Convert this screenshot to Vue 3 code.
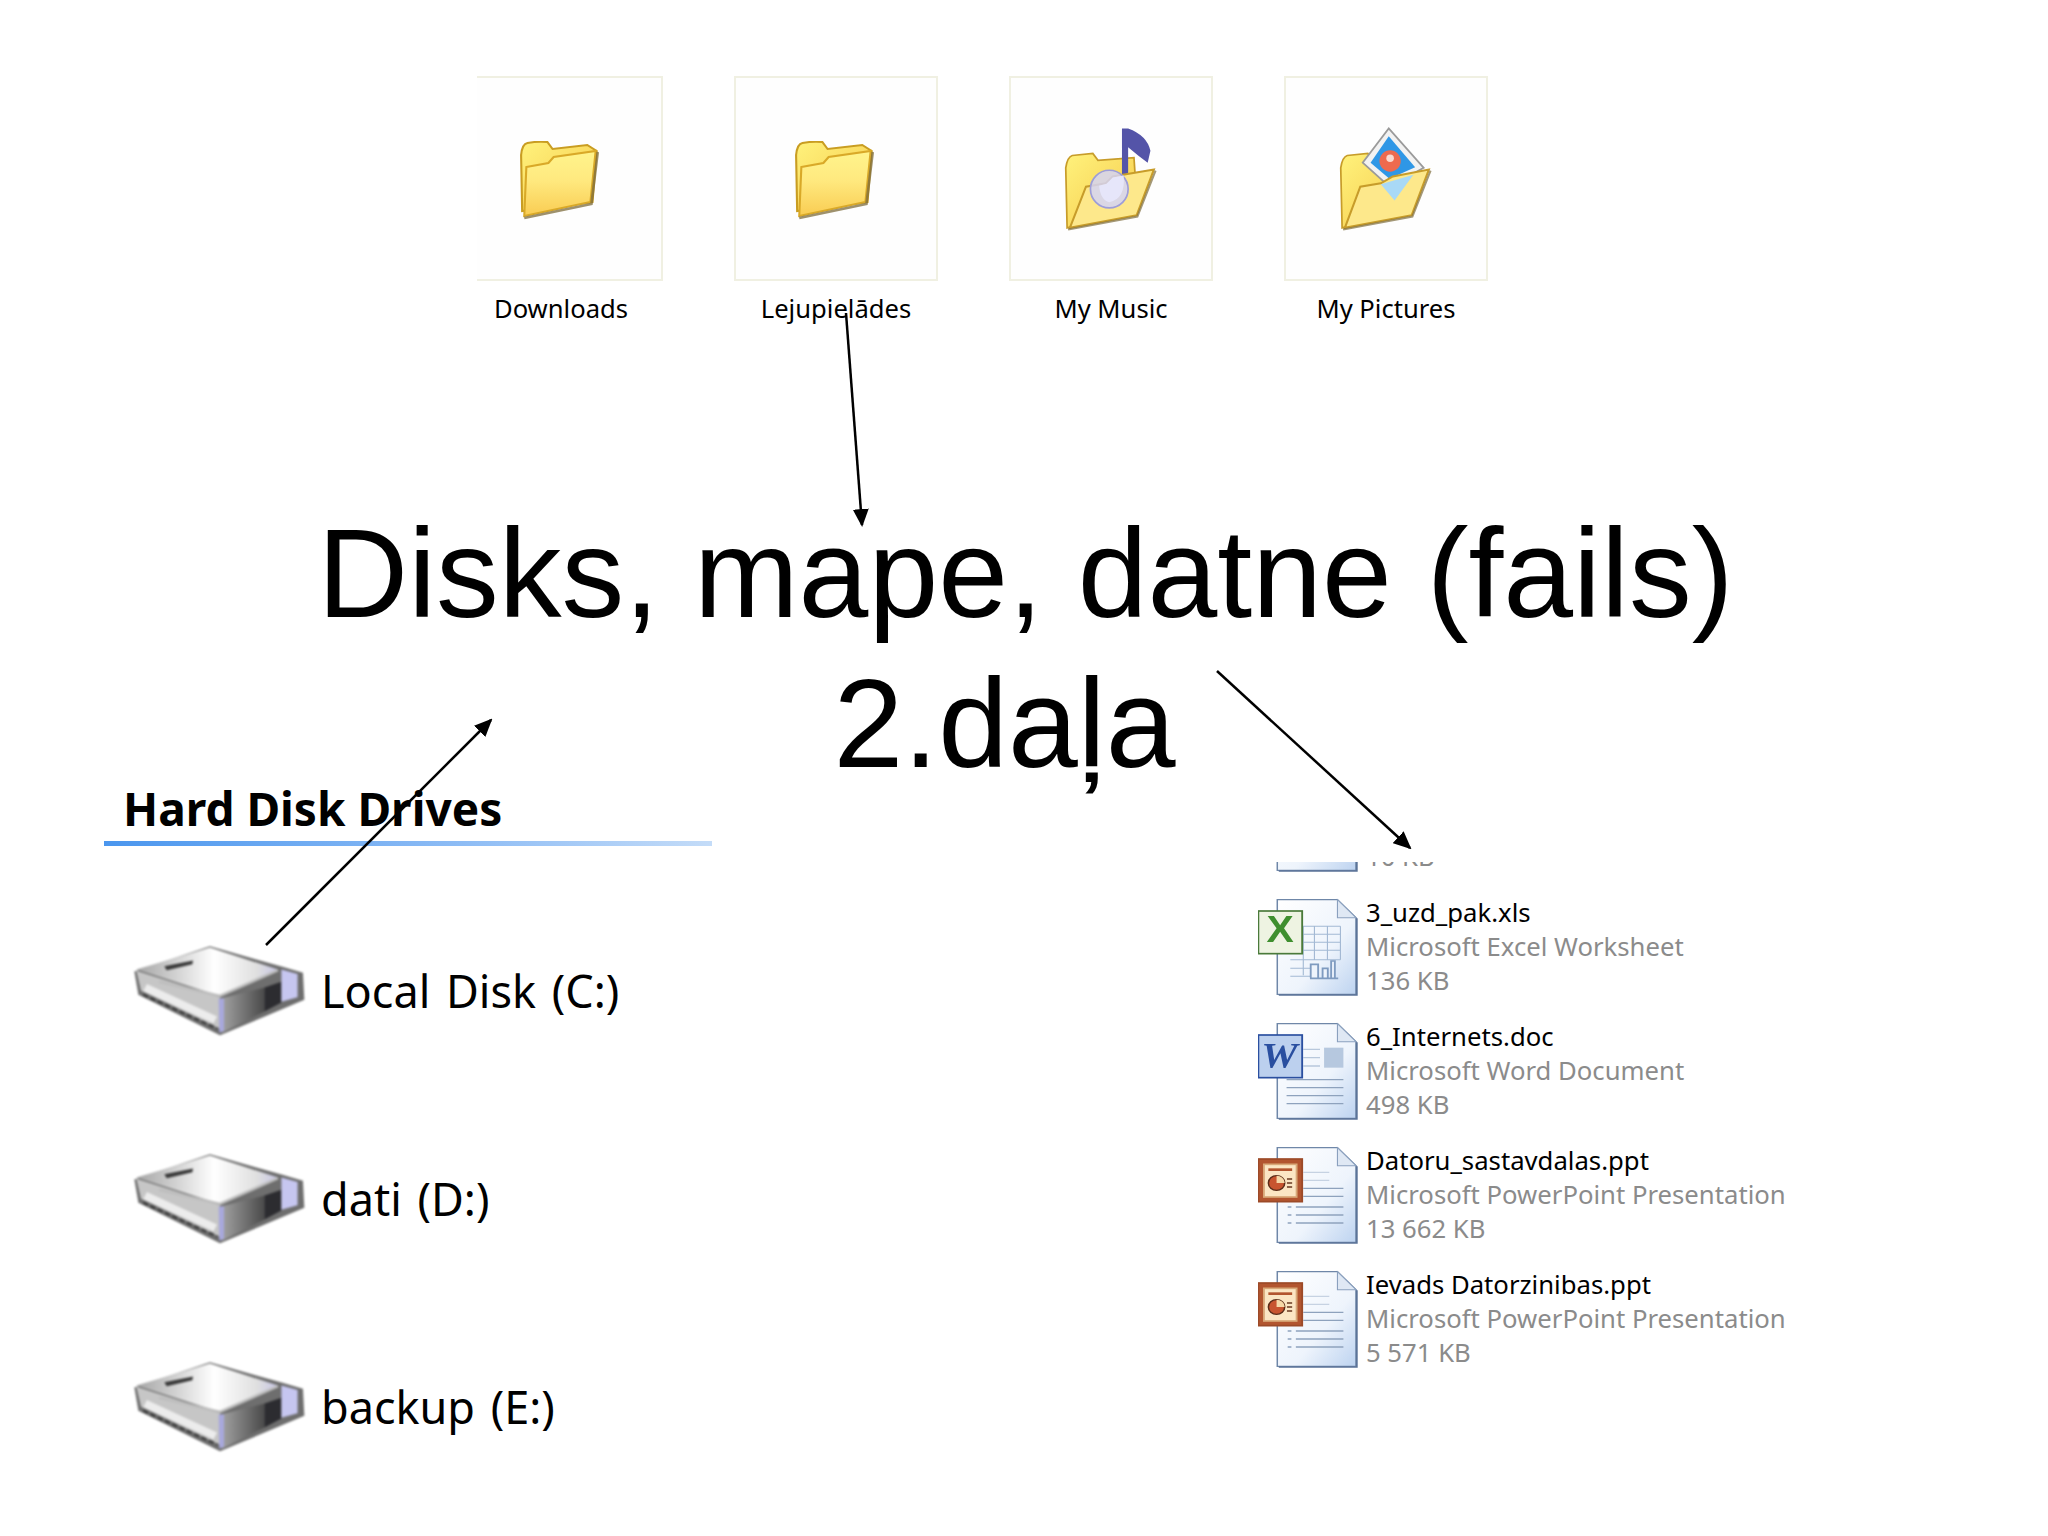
<template>
  <main class="slide">
    <svg class="sprite" aria-hidden="true">
      <defs>
        <linearGradient id="folderFront" x1="0" y1="0" x2="0" y2="1">
          <stop offset="0" stop-color="#fff48c" />
          <stop offset="0.45" stop-color="#ffe97f" />
          <stop offset="1" stop-color="#f9cc52" />
        </linearGradient>
        <linearGradient id="folderBack" x1="0" y1="0" x2="1" y2="1">
          <stop offset="0" stop-color="#fff27c" />
          <stop offset="1" stop-color="#f5c84a" />
        </linearGradient>
        <linearGradient id="diskTop" x1="0" y1="0" x2="1" y2="0">
          <stop offset="0" stop-color="#a5a5a5" />
          <stop offset="0.28" stop-color="#d2d2d2" />
          <stop offset="0.55" stop-color="#ffffff" />
          <stop offset="0.85" stop-color="#dfdfdf" />
          <stop offset="1" stop-color="#c6c5e4" />
        </linearGradient>
        <linearGradient id="diskSide" x1="0" y1="0" x2="1" y2="0">
          <stop offset="0" stop-color="#a4a4a4" />
          <stop offset="1" stop-color="#4a4a4a" />
        </linearGradient>
        <linearGradient id="docBody" x1="0" y1="0" x2="1" y2="1">
          <stop offset="0" stop-color="#ffffff" />
          <stop offset="0.6" stop-color="#eef4fc" />
          <stop offset="1" stop-color="#bdd3f0" />
        </linearGradient>
      </defs>

      <symbol id="icon-folder" viewBox="0 0 80 80" preserveAspectRatio="none">
        <path d="M3 70 L2 14 Q3 3 8 2 Q18 0 27 1 L32 8 L65 4 L74 10 L70 61 Z" fill="url(#folderBack)" stroke="#c99d22" stroke-width="2" />
        <path d="M7 26 L28 22 L33 16 L73 10 L68 61 L5 75 Z" fill="url(#folderFront)" stroke="#d9a928" stroke-width="2" />
        <path d="M5 77 L69 63 L75 11" fill="none" stroke="#7d6c3c" stroke-width="2.5" opacity="0.75" />
      </symbol>

      <symbol id="icon-music" viewBox="190 195 290 315">
        <path d="M207 495 L203 320 Q208 288 222 284 L282 278 L297 298 L402 290 L412 440 Z" fill="url(#folderBack)" stroke="#c79c2a" stroke-width="5" />
        <path d="M367 205 L385 205 Q440 225 450 270 L442 305 L415 285 L385 260 L385 340 L367 340 Z" fill="#5454a8" />
        <path d="M215 495 L262 375 L320 365 L340 345 L460 325 L410 458 Z" fill="#fde88b" stroke="#c79c2a" stroke-width="6" />
        <circle cx="330" cy="382" r="55" fill="#d4d4f4" fill-opacity="0.85" stroke="#9d9dd8" stroke-width="5" />
        <path d="M300 372 L322 366 L340 348 L372 342 Q378 410 330 420 Q305 415 300 372 Z" fill="#e6e6fa" />
        <path d="M210 500 L412 462 L465 328" fill="none" stroke="#7d6c3c" stroke-width="6" opacity="0.7" />
      </symbol>

      <symbol id="icon-pictures" viewBox="1015 195 290 315">
        <path d="M1032 495 L1028 320 Q1033 288 1047 284 L1107 278 L1122 298 L1227 290 L1237 440 Z" fill="url(#folderBack)" stroke="#c79c2a" stroke-width="5" />
        <path d="M1168 205 L1270 320 L1170 375 L1092 305 Z" fill="#f2f2f2" stroke="#9a9a9a" stroke-width="5" />
        <path d="M1168 228 L1245 318 L1170 352 L1115 305 Z" fill="#2f97e6" />
        <circle cx="1172" cy="300" r="31" fill="#ee6a4e" />
        <circle cx="1172" cy="292" r="11" fill="#fbd9cf" />
        <path d="M1040 495 L1085 375 L1145 365 L1180 345 L1285 325 L1235 458 Z" fill="#fde88b" stroke="#c79c2a" stroke-width="6" />
        <path d="M1145 368 L1240 340 L1185 415 Z" fill="#a9d9f6" />
        <path d="M1035 500 L1237 462 L1290 328" fill="none" stroke="#7d6c3c" stroke-width="6" opacity="0.7" />
      </symbol>

      <symbol id="icon-drive" viewBox="42 46 510 282" preserveAspectRatio="none">
        <path d="M46 128 L270 50 L480 112 L546 132 L550 216 L300 326 L58 200 Z" fill="#6e6e6e" />
        <path d="M52 126 L300 208 L300 306 L66 188 Z" fill="#c6c6c6" />
        <path d="M78 178 L286 278" stroke="#ececec" stroke-width="24" />
        <path d="M72 200 L292 305" stroke="#3e3e3e" stroke-width="8" stroke-dasharray="16 8" />
        <path d="M302 212 L432 178 L432 252 L306 318 Z" fill="url(#diskSide)" />
        <path d="M432 178 L482 160 L482 224 L432 252 Z" fill="#2c2c30" />
        <path d="M296 212 L312 212 L312 312 L298 318 Z" fill="#a8a8dc" />
        <path d="M482 122 L530 136 L530 208 L482 222 Z" fill="#c6c6f0" />
        <path d="M52 122 L270 54 L472 122 L300 204 Z" fill="url(#diskTop)" />
        <path d="M135 112 L220 94 L218 106 L142 124 Z" fill="#3a3a3a" />
        <path d="M120 160 L300 204 L472 124" fill="none" stroke="#bdbdbd" stroke-width="8" />
      </symbol>

      <symbol id="doc-sheet" viewBox="40 170 280 300" preserveAspectRatio="none">
        <path d="M100 178 L262 178 L312 232 L312 462 L100 462 Z" fill="url(#docBody)" stroke="#6f87a8" stroke-width="4" />
        <path d="M262 178 L262 232 L312 232 Z" fill="#dfe8f4" stroke="#8aa0be" stroke-width="3" />
        <path d="M104 464 L314 464 L314 234" fill="none" stroke="#5b7398" stroke-width="5" />
      </symbol>
    </svg>

    <section class="tiles">
      <figure v-for="tile in tiles" :key="tile.label" :class="['tile', { cut: tile.cut }]">
        <div class="tile-frame">
          <svg :class="['tile-icon', tile.icon]"><use :href="`#icon-${tile.icon}`" /></svg>
        </div>
        <figcaption>{{ tile.label }}</figcaption>
      </figure>
    </section>

    <h1 class="title">
      <span>Disks, mape, datne (fails)</span>
      <span class="second">2.daļa</span>
    </h1>

    <section class="lower">
      <div class="drives">
        <h2>Hard Disk Drives</h2>
        <ul>
          <li v-for="drive in drives" :key="drive">
            <svg class="drive-icon"><use href="#icon-drive" /></svg>
            <span>{{ drive }}</span>
          </li>
        </ul>
      </div>

      <div class="files">
        <ul>
          <li v-for="file in files" :key="file.name">
            <svg class="file-icon" viewBox="40 170 280 300" preserveAspectRatio="none">
              <use href="#doc-sheet" x="40" y="170" width="280" height="300" />
              <template v-if="file.kind === 'xls'">
                <path d="M135 258 H270 M135 282 H270 M135 306 H270 M135 330 H270 M135 358 H270 M135 384 H190 M135 408 H190 M170 258 V405 M200 258 V358 M235 258 V358 M270 258 V358" stroke="#a3b9d4" stroke-width="3" fill="none" />
                <path d="M190 412 V372 H210 V412 M222 412 V384 H236 V412 M245 412 V362 H255 V412 M188 414 H264" stroke="#7f9bc0" stroke-width="5" fill="#eef4fc" />
                <rect x="49" y="212" width="118" height="128" fill="#eef3e2" stroke="#4a7a3a" stroke-width="5" />
                <text x="108" y="306" class="badge-x">X</text>
              </template>
              <template v-else-if="file.kind === 'doc'">
                <path d="M170 255 H215 M170 280 H215 M170 305 H215" stroke="#b8c8dc" stroke-width="4" />
                <rect x="226" y="250" width="52" height="60" fill="#b6c8df" />
                <path d="M125 346 H278 M125 370 H278 M125 394 H278 M125 418 H278" stroke="#8ea2bd" stroke-width="4" />
                <rect x="49" y="212" width="118" height="128" fill="#bcd0ee" stroke="#2a4fa0" stroke-width="5" />
                <text x="106" y="312" class="badge-w">W</text>
              </template>
              <template v-else>
                <path d="M170 252 H240 M170 276 H240" stroke="#c6d2e2" stroke-width="4" />
                <path d="M170 300 H278 M170 324 H278 M150 356 H278 M150 380 H278 M150 404 H278" stroke="#8ea2bd" stroke-width="4" />
                <path d="M128 356 H138 M128 380 H138 M128 404 H138" stroke="#8ea2bd" stroke-width="4" />
                <rect x="49" y="212" width="118" height="128" fill="#b2552f" stroke="#9c4a28" stroke-width="5" />
                <rect x="64" y="228" width="88" height="98" fill="#fbe6c4" stroke="#d8a878" stroke-width="5" />
                <rect x="76" y="240" width="64" height="8" fill="#b2552f" />
                <circle cx="98" cy="284" r="22" fill="#c8552f" stroke="#5a2c18" stroke-width="4" />
                <path d="M98 284 V262 A22 22 0 0 1 120 284 Z" fill="#f6d9a8" />
                <path d="M126 272 H140 M126 284 H140 M126 296 H140" stroke="#6a3a20" stroke-width="4" />
              </template>
            </svg>
            <div class="file-text">
              <strong>{{ file.name }}</strong>
              <span>{{ file.type }}</span>
              <span>{{ file.size }}</span>
            </div>
          </li>
        </ul>
      </div>
    </section>

    <svg class="arrows" viewBox="0 0 2048 1536">
      <defs>
        <marker id="head" markerWidth="18" markerHeight="16" refX="16" refY="8" orient="auto" markerUnits="userSpaceOnUse">
          <path d="M0 0 L18 8 L0 16 Z" fill="#000" />
        </marker>
      </defs>
      <line x1="846" y1="313" x2="862" y2="525" />
      <line x1="266" y1="945" x2="491" y2="720" />
      <line x1="1217" y1="671" x2="1410" y2="848" />
    </svg>
  </main>
</template>

<script setup>
const tiles = [
  { label: 'Downloads', icon: 'folder', cut: true },
  { label: 'Lejupielādes', icon: 'folder' },
  { label: 'My Music', icon: 'music' },
  { label: 'My Pictures', icon: 'pictures' }
];

const drives = ['Local Disk (C:)', 'dati (D:)', 'backup (E:)'];

const files = [
  { name: '2_uzd.doc', type: 'Microsoft Word Document', size: '10 KB', kind: 'doc' },
  { name: '3_uzd_pak.xls', type: 'Microsoft Excel Worksheet', size: '136 KB', kind: 'xls' },
  { name: '6_Internets.doc', type: 'Microsoft Word Document', size: '498 KB', kind: 'doc' },
  { name: 'Datoru_sastavdalas.ppt', type: 'Microsoft PowerPoint Presentation', size: '13 662 KB', kind: 'ppt' },
  { name: 'Ievads Datorzinibas.ppt', type: 'Microsoft PowerPoint Presentation', size: '5 571 KB', kind: 'ppt' }
];
</script>

<style>
html,
body {
  margin: 0;
  background: #fff;
}
</style>

<style scoped>
.slide {
  position: relative;
  width: 2048px;
  height: 1536px;
  overflow: hidden;
  background: #fff;
  color: #000;
  font-family: "Liberation Sans", Arial, sans-serif;
}

.sprite {
  position: absolute;
  width: 0;
  height: 0;
}

.tiles {
  display: flex;
  gap: 71px;
  padding: 76px 0 0 459px;
  font-family: "Noto Sans", sans-serif;
}

.tile {
  margin: 0;
  width: 204px;
}

.tile-frame {
  position: relative;
  box-sizing: border-box;
  width: 204px;
  height: 205px;
  display: flex;
  align-items: center;
  justify-content: center;
  border: 2px solid #f0f0e2;
  background: #fefefe;
}

.tile.cut .tile-frame::before {
  content: "";
  position: absolute;
  left: -2px;
  top: -2px;
  bottom: -2px;
  width: 18px;
  background: #fff;
}

.tile-icon {
  width: 84px;
  height: 80px;
  margin-top: 5px;
  filter: blur(0.6px);
}

.tile-icon.music,
.tile-icon.pictures {
  width: 100px;
  height: 108px;
  margin-top: 0;
}

figcaption {
  margin-top: 8px;
  text-align: center;
  font-size: 25.6px;
  line-height: 40px;
  white-space: nowrap;
}

.title {
  display: flex;
  flex-direction: column;
  align-items: center;
  margin: 170px 0 0;
  padding-left: 3px;
  font-size: 125.5px;
  font-weight: 400;
  line-height: 150px;
}

.title .second {
  margin-right: 42px;
}

.lower {
  display: grid;
  grid-template-columns: 608px 1fr;
  gap: 546px;
  margin-top: -18px;
  padding-left: 104px;
  font-family: "Noto Sans", sans-serif;
}

.drives h2 {
  margin: 0;
  padding: 0 0 2px 19px;
  height: 58px;
  font-size: 46px;
  line-height: 54px;
  font-weight: 700;
  border-bottom: 5px solid;
  border-image: linear-gradient(90deg, #4a96ee, #8fbdf5 60%, #c4dcf8) 1;
}

ul {
  list-style: none;
  margin: 0;
  padding: 0;
}

.drives ul {
  display: flex;
  flex-direction: column;
  gap: 117px;
  margin-top: 99px;
  padding-left: 29px;
}

.drives li {
  display: flex;
  align-items: center;
  gap: 16px;
  height: 91px;
  font-size: 45px;
  word-spacing: 4px;
}

.drive-icon {
  width: 172px;
  height: 91px;
  filter: blur(0.9px);
}

.files {
  height: 640px;
  margin-top: 81px;
  overflow: hidden;
}

.files ul {
  display: flex;
  flex-direction: column;
  margin-top: -101px;
}

.files li {
  display: flex;
  align-items: center;
  gap: 7px;
  height: 124px;
}

.file-icon {
  width: 104px;
  height: 100px;
  margin-left: -3px;
  flex: none;
  filter: blur(0.5px);
}

.file-text {
  display: flex;
  flex-direction: column;
  font-size: 25.7px;
  line-height: 34px;
  color: #8b8b8b;
  white-space: nowrap;
}

.file-text strong {
  font-weight: 400;
  color: #000;
}

.badge-x {
  font: 700 110px "Liberation Sans", sans-serif;
  fill: #3f8f2f;
  text-anchor: middle;
}

.badge-w {
  font: italic 700 110px "Liberation Serif", serif;
  fill: #2a4fa0;
  text-anchor: middle;
}

.arrows {
  position: absolute;
  inset: 0;
  width: 2048px;
  height: 1536px;
  pointer-events: none;
}

.arrows line {
  stroke: #000;
  stroke-width: 2.5;
  marker-end: url(#head);
}
</style>
